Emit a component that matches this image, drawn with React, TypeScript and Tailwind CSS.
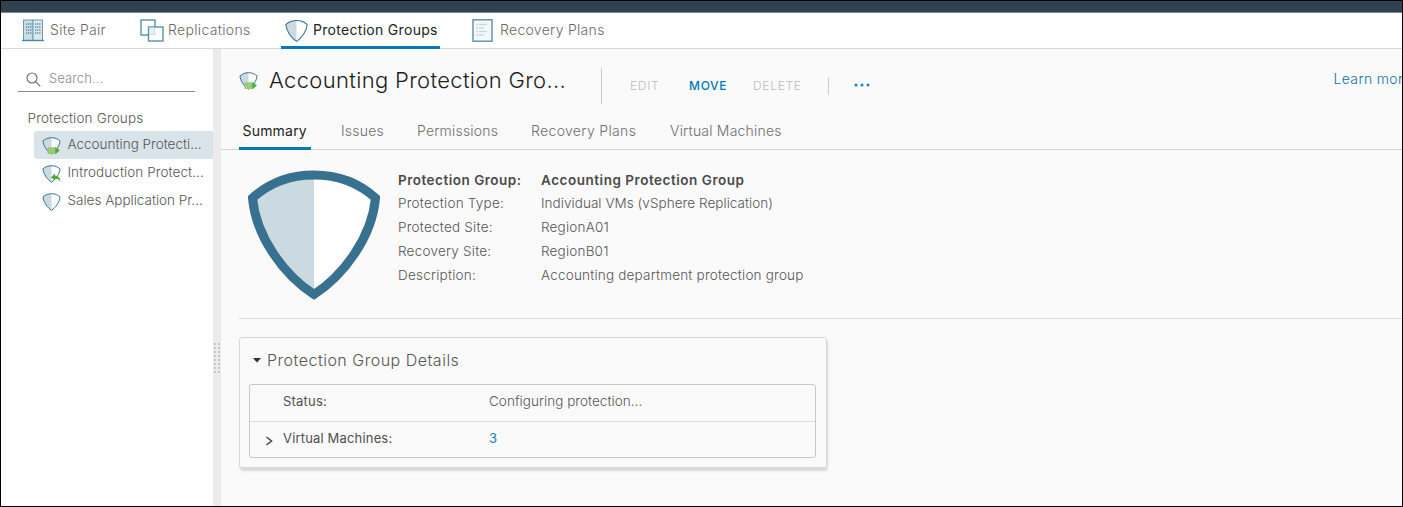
import React from "react";

type Badge = "none" | "configuring" | "recovery";

const OUTLINE = "M66 5C91 5 112 14 127.500 28C124 67 96 105 66 124.500C36 105 8 67 4.500 28C20 14 41 5 66 5Z";

function Shield({ className, stroke = 8, badge = "none" }: { className: string; stroke?: number; badge?: Badge }) {
  return (
    <svg viewBox="0 0 132 130" className={className} fill="none">
      <path d={OUTLINE} fill="#fff" />
      <path d="M66 5V124.500C36 105 8 67 4.500 28C20 14 41 5 66 5Z" fill="#cbd9e0" />
      <path d={OUTLINE} stroke="#38708f" strokeWidth={stroke} />
      {badge === "configuring" && (
        <g>
          <path d="M38 74H98L124 96L98 122H38Z" fill="#8dc56f" />
          <path d="M94 74L126 97L94 122Z" fill="#4fac3a" />
          <path d="M52 74V122M68 74V122M84 74V122" stroke="#b5dba0" strokeWidth="5" />
        </g>
      )}
      {badge === "recovery" && (
        <path d="M62 88L92 62V78C116 78 130 96 130 122C120 104 110 100 92 100V114Z" fill="#4dac36" />
      )}
    </svg>
  );
}

function SitePairIcon() {
  return (
    <svg viewBox="0 0 22 23" className="h-[23px] w-[22px]" fill="none">
      <rect x="1.500" y="1" width="9.500" height="20.500" fill="#cddde5" stroke="#6a9ab2" />
      <rect x="11" y="1" width="9.500" height="20.500" fill="#dce7ec" stroke="#6a9ab2" />
      <path
        d="M4 5H9.500M4 8H9.500M4 11H9.500M4 14H9.500M13 5H18.500M13 8H18.500M13 11H18.500M13 14H18.500"
        stroke="#5b8fa9"
        strokeWidth="1.500"
        strokeDasharray="1.300 0.800"
      />
      <path d="M0 21.500H22" stroke="#4d86a3" strokeWidth="1.400" />
    </svg>
  );
}

function ReplicationsIcon() {
  return (
    <svg viewBox="0 0 24 23" className="h-[23px] w-6" fill="none">
      <rect x="1" y="1" width="14" height="15" fill="#fff" stroke="#4f87a5" strokeWidth="1.300" />
      <rect x="8.500" y="8" width="14.500" height="14" fill="#fff" stroke="#4f87a5" strokeWidth="1.300" />
      <rect x="9.200" y="8.700" width="5.600" height="7" fill="#e8f0f3" stroke="#b8cfda" strokeWidth="0.700" />
    </svg>
  );
}

function PlanIcon() {
  return (
    <svg viewBox="0 0 21 23" className="h-[23px] w-[21px]" fill="none">
      <rect x="1" y="0.800" width="19" height="21.400" fill="#f4f8fa" stroke="#4f87a5" strokeWidth="1.300" />
      <path d="M4 5.500H6M7 5.500H15M4 9H6M7 9H12M4 12.500H6M7 12.500H15M4 16H6M7 16H12" stroke="#c5d9e2" strokeWidth="1.300" />
    </svg>
  );
}

function TreeItem({ label, badge, selected, tracking = "" }: { label: string; badge: Badge; selected?: boolean; tracking?: string }) {
  return (
    <li className={"flex h-7 items-center rounded-l-[3px] pl-2 text-[13.5px] " + (selected ? "bg-[#d9e4ea]" : "")}>
      <Shield className="mt-[2px] h-[18px] w-[19px]" stroke={7} badge={badge} />
      <span className={"mb-[2px] ml-[6.5px] " + tracking}>{label}</span>
    </li>
  );
}

function Field({
  label,
  value,
  strong,
  labelTracking = "tracking-[0.23px]",
  tracking = "",
}: {
  label: string;
  value: string;
  strong?: boolean;
  labelTracking?: string;
  tracking?: string;
}) {
  return (
    <div className={"flex h-6 items-center text-[13.5px] " + (strong ? "font-semibold text-[#4a4a4a]" : "pb-[2px]")}>
      <dt className={"w-[143px] " + labelTracking}>{label}</dt>
      <dd className={tracking}>{value}</dd>
    </div>
  );
}

const GRIP_ROWS = [0, 4, 8, 12, 16, 20, 24, 28];

export default function App() {
  return (
    <div className="flex h-[507px] w-[1403px] flex-col overflow-hidden border border-black bg-white font-['Inter','Liberation_Sans',sans-serif] text-[13px] font-light whitespace-nowrap text-[#565656]">
      <header className="h-3 shrink-0 border-b border-[#7c8790] bg-[#314351]" />

      <nav className="flex h-9 shrink-0 border-b border-[#d8d8d8] text-[14px] tracking-[0.33px] text-[#6a6a6a]">
        <a className="ml-[21px] flex w-[118px] items-center">
          <SitePairIcon />
          <span className="mb-[2px] ml-[6px]">Site Pair</span>
        </a>
        <a className="flex w-[141px] items-center">
          <ReplicationsIcon />
          <span className="mb-[2px] ml-1">Replications</span>
        </a>
        <a className="-mb-px flex w-[159px] items-center border-b-[3px] border-[#0079b8] pl-1 font-normal text-[#222]">
          <Shield className="mt-[2px] h-6 w-[23px]" stroke={6} />
          <span className="ml-[5px] tracking-[0.3px]">Protection Groups</span>
        </a>
        <a className="ml-[32px] flex items-center">
          <PlanIcon />
          <span className="mb-[2px] ml-[7px] tracking-[0.3px]">Recovery Plans</span>
        </a>
      </nav>

      <div className="flex min-h-0 flex-1">
        <aside className="w-[212px] shrink-0">
          <label className="mt-[18px] ml-[17px] flex h-[25px] w-[177px] items-center border-b border-[#8c8c8c] pl-2 text-[#8c8c8c]">
            <svg viewBox="0 0 15 15" className="size-[15px]" fill="none" stroke="#747474" strokeWidth="1.200">
              <circle cx="6" cy="6" r="5" />
              <path d="M9.700 9.700L14.300 14.300" />
            </svg>
            <span className="ml-2 tracking-[0.1px]">Search...</span>
          </label>
          <h2 className="mt-[14px] ml-[26.5px] h-[25px] text-[13.5px] leading-6 font-light tracking-[0.17px]">Protection Groups</h2>
          <ul className="ml-[33px]">
            <TreeItem label="Accounting Protecti..." badge="configuring" selected />
            <TreeItem label="Introduction Protect..." badge="recovery" tracking="tracking-[0.08px]" />
            <TreeItem label="Sales Application Pr..." badge="none" />
          </ul>
        </aside>

        <div className="flex w-2 shrink-0 justify-center bg-[#ebebeb]">
          <svg viewBox="0 0 6 32" className="mt-[293px] h-8 w-[6px]" fill="#c6c6c6">
            {GRIP_ROWS.map((y) => (
              <g key={y}>
                <rect x="0" y={y + 1} width="2" height="2" />
                <rect x="4" y={y + 1} width="2" height="2" />
              </g>
            ))}
          </svg>
        </div>

        <main className="min-w-0 flex-1 bg-[#fafafa]">
          <div className="flex h-[73px] pt-4 pl-[18px]">
            <Shield className="mt-[7px] h-[18px] w-[19px] shrink-0" stroke={7} badge="configuring" />
            <h1 className="ml-[11px] w-[332px] shrink-0 text-[22px] leading-[30px] font-light tracking-[0.34px] text-[#1d1d1d]">
              Accounting Protection Gro...
            </h1>
            <div className="mt-[3px] h-9 border-l border-[#ccc]" />
            <div className="mt-[11px] flex h-5 items-center text-[12px] tracking-[0.7px] text-[#bdbdbd]">
              <span className="ml-7 w-[59px]">EDIT</span>
              <span className="w-16 font-medium text-[#0079b8]">MOVE</span>
              <span className="w-[75px]">DELETE</span>
              <span className="h-[18px] border-l border-[#ccc]" />
              <svg viewBox="0 0 16 4" className="mb-[2px] ml-[25px] h-1 w-4" fill="#1286c8">
                <circle cx="2" cy="2" r="1.500" />
                <circle cx="8" cy="2" r="1.500" />
                <circle cx="14" cy="2" r="1.500" />
              </svg>
            </div>
            <a className="ml-[463.5px] h-7 text-[14px] leading-7 tracking-[0.35px] text-[#1472ad]">Learn more</a>
          </div>

          <div className="flex h-7 border-b border-[#d5d5d5] pl-[18px] text-[14px] leading-[18px] tracking-[0.2px] text-[#6f6f6f]">
            <a className="-mb-px w-[72px] border-b-[3px] border-[#0079b8] pl-[3.5px] font-normal text-[#222]">Summary</a>
            <a className="ml-[30px] w-[76px]">Issues</a>
            <a className="w-[114px]">Permissions</a>
            <a className="w-[139px] tracking-[0.34px]">Recovery Plans</a>
            <a>Virtual Machines</a>
          </div>

          <section className="ml-[18px] flex h-[169px] border-b border-[#dcdcdc] pt-[18px]">
            <Shield className="mt-[2px] ml-[9px] h-[130px] w-[132px]" stroke={9} />
            <dl className="ml-[18px]">
              <Field label="Protection Group:" value="Accounting Protection Group" strong labelTracking="tracking-[0.5px]" tracking="tracking-[0.53px]" />
              <Field label="Protection Type:" value="Individual VMs (vSphere Replication)" tracking="tracking-[0.05px]" />
              <Field label="Protected Site:" value="RegionA01" tracking="tracking-[0.2px]" />
              <Field label="Recovery Site:" value="RegionB01" tracking="tracking-[0.2px]" />
              <Field label="Description:" value="Accounting department protection group" tracking="tracking-[0.2px]" />
            </dl>
          </section>

          <section className="mt-[18px] ml-[18px] h-[131px] w-[588px] rounded-[3px] border border-[#d8d8d8] px-[9px] shadow-[1px_3px_2px_#dadada]">
            <h3 className="flex h-[46px] items-center pl-1 text-[16px] font-light tracking-[0.5px]">
              <svg viewBox="0 0 8 5" className="mb-px h-[5px] w-2">
                <path d="M0 0H8L4 4.500Z" fill="#333" />
              </svg>
              <span className="mb-[2px] ml-[6px]">Protection Group Details</span>
            </h3>
            <div className="h-[74px] w-[567px] rounded-[3px] border border-[#c8c8c8] text-[#505050]">
              <div className="flex h-[37px] items-center border-b border-[#ddd] pl-8">
                <span className="mb-[2px] ml-px w-[206px] font-normal tracking-[0.2px]">Status:</span>
                <span className="mb-[3px] text-[13.5px] tracking-[0.04px] text-[#565656]">Configuring protection...</span>
              </div>
              <div className="flex h-[35px] items-center pl-[15px]">
                <svg viewBox="0 0 8 10" className="mt-[3px] h-[10px] w-2" fill="none" stroke="#444" strokeWidth="1.500">
                  <path d="M1.500 1L6.500 5L1.500 9" />
                </svg>
                <span className="mb-px ml-[10px] w-[206px] font-normal tracking-[0.17px]">Virtual Machines:</span>
                <span className="mb-px font-normal text-[#1680c3]">3</span>
              </div>
            </div>
          </section>
        </main>
      </div>
    </div>
  );
}
